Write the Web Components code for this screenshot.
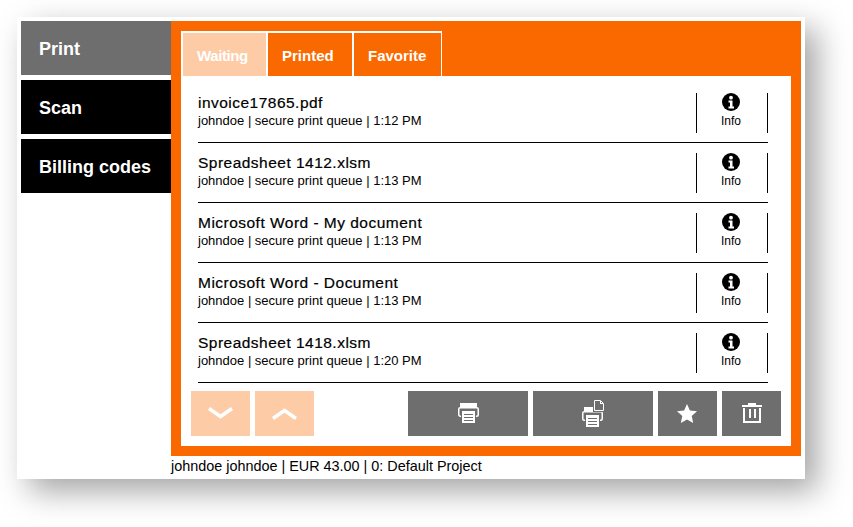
<!DOCTYPE html>
<html>
<head>
<meta charset="utf-8">
<title>Print release</title>
<style>
    html, body { margin: 0; background: #fff; height: 527px; overflow: hidden; }
    body { font-family: "Liberation Sans", Arial, sans-serif; color: #000; padding-top: 17px; box-sizing: border-box; }
</style>
</head>
<body>
<print-app>
    <nav-item slot="nav" active>Print</nav-item>
    <nav-item slot="nav">Scan</nav-item>
    <nav-item slot="nav">Billing codes</nav-item>

    <tab-item slot="tabs" active first style="width:87px;letter-spacing:-0.4px">Waiting</tab-item>
    <tab-item slot="tabs" style="width:86px">Printed</tab-item>
    <tab-item slot="tabs" last style="width:88px">Favorite</tab-item>

    <job-row slot="jobs" name="invoice17865.pdf" time="1:12 PM"></job-row>
    <job-row slot="jobs" name="Spreadsheet 1412.xlsm" time="1:13 PM"></job-row>
    <job-row slot="jobs" name="Microsoft Word - My document" time="1:13 PM"></job-row>
    <job-row slot="jobs" name="Microsoft Word - Document" time="1:13 PM"></job-row>
    <job-row slot="jobs" name="Spreadsheet 1418.xlsm" time="1:20 PM"></job-row>

    <action-btn slot="paging" light width="59">
        <svg width="25" height="13" viewBox="0 0 25 13"><path d="M1 1.500l11.500 8 11.500-8" fill="none" stroke="#fff" stroke-width="3.600"/></svg>
    </action-btn>
    <action-btn slot="paging" light width="59">
        <svg width="25" height="13" viewBox="0 0 25 13"><path d="M1 11.500l11.500-8 11.500 8" fill="none" stroke="#fff" stroke-width="3.600"/></svg>
    </action-btn>

    <action-btn slot="actions" width="120">
        <svg style="margin-bottom:1px" width="22" height="20" viewBox="0 0 22 20">
            <path fill="#fff" d="M3 0h17v4H3z"/>
            <rect x="1.750" y="4.750" width="19.500" height="8.500" rx="1.500" fill="none" stroke="#fff" stroke-width="1.500"/>
            <path fill="#6e6e6e" d="M4 7h15v7H4z"/>
            <path fill="#fff" d="M5 8h13v12H5z"/>
            <path stroke="#6e6e6e" d="M7 11.500h9M7 14.500h9M7 17.500h9"/>
        </svg>
    </action-btn>
    <action-btn slot="actions" width="120">
        <svg width="22" height="27" viewBox="0 0 22 27">
            <path fill="#fff" d="M2 7h9v4H2z"/>
            <rect x=".750" y="11.750" width="19.500" height="8.500" rx="1.500" fill="none" stroke="#fff" stroke-width="1.500"/>
            <path fill="#6e6e6e" d="M3 14h15v7H3z"/>
            <path fill="#fff" d="M4 15h13v12H4z"/>
            <path stroke="#6e6e6e" d="M6 18.500h9M6 21.500h9M6 24.500h9"/>
            <path fill="#6e6e6e" d="M11 0h11v12H11z"/>
            <path fill="none" stroke="#fff" d="M12.500.5h6l3 3v7h-9z"/>
            <path fill="#fff" d="M18 1h1v2h2v1h-3z"/>
        </svg>
    </action-btn>
    <action-btn slot="actions" width="59">
        <svg style="margin:1px 1px 0 0" width="20" height="20" viewBox="0 0 20 20"><path fill="#fff" d="M10 0l2.900 6.500 7.100.7-5.300 4.700 1.500 7.100-6.200-3.600-6.200 3.600 1.500-7.100L0 7.200l7.100-.7z"/></svg>
    </action-btn>
    <action-btn slot="actions" width="59">
        <svg style="margin:0 0 1px 1px" width="20" height="20" viewBox="0 0 20 20" fill="#fff"><path d="M6 0h8v2h6v2H0V2h6zM1 5h2v13h14V5h2v15H1zM7 6h2v9H7zM12 6h2v9h-2z"/></svg>
    </action-btn>

    <span slot="status">johndoe johndoe | EUR 43.00 | 0: Default Project</span>
</print-app>

<script>
class PrintApp extends HTMLElement {
    constructor() {
        super();
        this.attachShadow({ mode: 'open' });
        this.shadowRoot.innerHTML = `
            <style>
                :host { display: block; width: 788px; height: 462px; margin-left: 17px; background: #fff;
                    box-shadow: 12px 12px 30px rgba(0,0,0,0.36); }
                .shell { display: flex; padding: 4px 4px 0; height: 458px; }
                .nav { width: 150px; display: flex; flex-direction: column; gap: 5px; }
                .main { width: 630px; display: flex; flex-direction: column; }
                .panel { height: 435px; box-sizing: border-box; background: #fa6900; padding: 10px; display: flex; flex-direction: column; }
                .tabs { height: 45px; display: flex; }
                .body { flex: 1; background: #fff; display: flex; flex-direction: column; }
                .jobs { padding: 7px 23px 0 17px; height: 307px; box-sizing: border-box; display: flex; flex-direction: column; }
                .toolbar { display: flex; justify-content: space-between; padding: 8px 10px 0; }
                .group { display: flex; gap: 5px; }
                .status { font-size: 14.4px; line-height: 20px; }
            </style>
            <div class="shell">
                <div class="nav"><slot name="nav"></slot></div>
                <div class="main">
                    <div class="panel">
                        <div class="tabs"><slot name="tabs"></slot></div>
                        <div class="body">
                            <div class="jobs"><slot name="jobs"></slot></div>
                            <div class="toolbar">
                                <div class="group"><slot name="paging"></slot></div>
                                <div class="group"><slot name="actions"></slot></div>
                            </div>
                        </div>
                    </div>
                    <div class="status"><slot name="status"></slot></div>
                </div>
            </div>
        `;
    }
}

class NavItem extends HTMLElement {
    constructor() {
        super();
        this.attachShadow({ mode: 'open' });
        this.shadowRoot.innerHTML = `
            <style>
                :host { display: flex; align-items: center; height: 54px; box-sizing: border-box; padding: 2px 0 0 18px;
                    background: #000; color: #fff; font-size: 18px; font-weight: bold; }
                :host([active]) { background: #6e6e6e; }
            </style>
            <slot></slot>
        `;
    }
}

class TabItem extends HTMLElement {
    constructor() {
        super();
        this.attachShadow({ mode: 'open' });
        this.shadowRoot.innerHTML = `
            <style>
                :host { display: flex; align-items: center; box-sizing: border-box; height: 45px;
                    border: solid #fff; border-width: 2px 2px 0 0; padding: 2px 0 0 14px;
                    color: #fff; font-size: 15px; font-weight: bold; flex: none; }
                :host([first]) { border-left-width: 2px; }
                :host([last]) { border-right-width: 1px; }
                :host([active]) { background: #fdcba6; }
            </style>
            <slot></slot>
        `;
    }
}

class JobRow extends HTMLElement {
    constructor() {
        super();
        this.attachShadow({ mode: 'open' });
        this.shadowRoot.innerHTML = `
            <style>
                :host { display: flex; flex: none; height: 60px; box-sizing: border-box; padding-top: 10px; border-bottom: 1px solid #000; }
                .text { flex: 1; }
                .name { font-size: 15.5px; line-height: 20px; letter-spacing: 0.48px; -webkit-text-stroke: 0.2px #000; }
                .meta { font-size: 13px; line-height: 16px; }
                .info { width: 70px; height: 40px; border: solid #000; border-width: 0 1px; display: flex; flex-direction: column; align-items: center; font-size: 12px; }
                .info > * { position: relative; left: -1px; }
                svg { display: block; margin-bottom: 3px; }
            </style>
            <div class="text">
                <div class="name"></div>
                <div class="meta"></div>
            </div>
            <div class="info">
                <svg width="18" height="18" viewBox="0 0 18 18"><circle cx="9" cy="9" r="9"/><circle cx="9" cy="4.700" r="1.900" fill="#fff"/><path fill="#fff" d="M6.500 7.500h4v6h1.500v2H6.500v-2H8v-4H6.500z"/></svg>
                <span>Info</span>
            </div>
        `;
        this.shadowRoot.querySelector('.name').textContent = this.getAttribute('name');
        this.shadowRoot.querySelector('.meta').textContent = 'johndoe | secure print queue | ' + this.getAttribute('time');
    }
}

class ActionBtn extends HTMLElement {
    constructor() {
        super();
        this.attachShadow({ mode: 'open' });
        this.shadowRoot.innerHTML = `
            <style>
                :host { display: flex; align-items: center; justify-content: center; height: 45px; background: #6e6e6e; }
                :host([light]) { background: #fdcba6; }
            </style>
            <slot></slot>
        `;
        this.style.width = this.getAttribute('width') + 'px';
    }
}

customElements.define('print-app', PrintApp);
customElements.define('nav-item', NavItem);
customElements.define('tab-item', TabItem);
customElements.define('job-row', JobRow);
customElements.define('action-btn', ActionBtn);
</script>
</body>
</html>
